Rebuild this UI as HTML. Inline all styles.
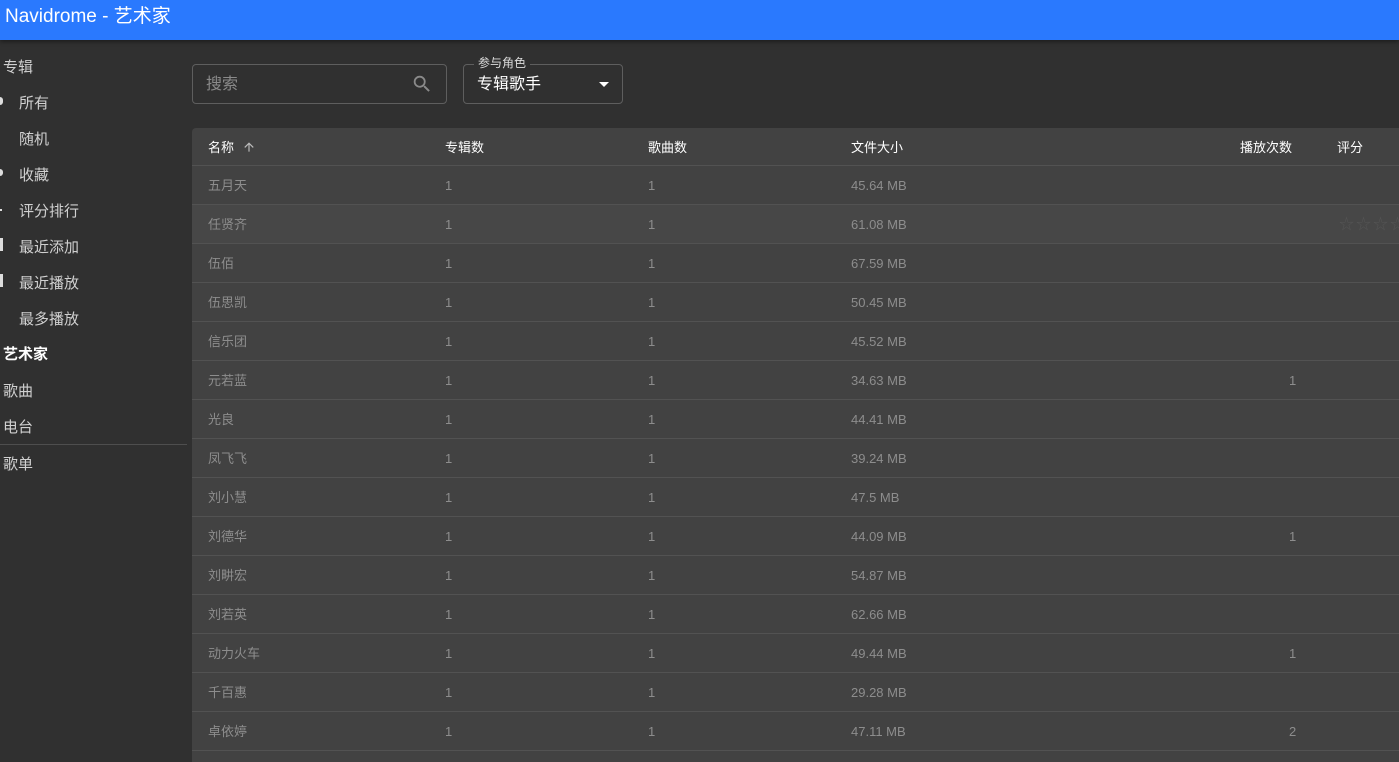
<!DOCTYPE html>
<html><head><meta charset="utf-8"><style>
*{margin:0;padding:0;box-sizing:border-box}
html,body{width:1399px;height:762px;overflow:hidden}
body{background:#303030;font-family:"Liberation Sans","Noto Sans CJK SC",sans-serif;position:relative}
.top{position:absolute;left:0;top:0;width:1399px;height:40px;background:#2a79fe;color:#fff;font-size:19px;line-height:34px;padding-left:5px;box-shadow:0 2px 4px rgba(0,0,0,.4)}
.si{position:absolute;font-size:15px;color:#d0d0d0;white-space:nowrap}
.ic{position:absolute;left:0;background:#ddd}
.sel{color:#fff;font-weight:bold}
.search{position:absolute;left:192px;top:64px;width:255px;height:40px;border:1px solid #5e5e5e;border-radius:4px;color:#8a8a8a;font-size:16px;line-height:39px;padding-left:13px}
.drop{position:absolute;left:463px;top:64px;width:160px;height:40px;border:1px solid #5e5e5e;border-radius:4px;color:#fff;font-size:16px;line-height:40px;padding-left:13px}
.lab{position:absolute;left:10px;top:-9px;font-size:12px;line-height:14px;background:#303030;padding:0 4px;color:#ddd}
.tbl{position:absolute;left:192px;top:128px;width:1207px;height:634px;background:#424242;border-radius:4px 0 0 0;overflow:hidden}
.row{position:absolute;left:0;width:1207px;height:39px;border-bottom:1px solid #525252;font-size:13px;color:#8d8d8d}
.row span{position:absolute;top:0;line-height:40px;white-space:nowrap}
.hd{color:#fff;height:38px}
</style></head><body>
<div class="top">Navidrome - 艺术家</div>
<div class="si" style="left:3px;top:56px">专辑</div>
<div class="ic" style="top:97px;width:3px;height:8px;border-radius:0 4px 4px 0"></div>
<div class="si" style="left:19px;top:92px">所有</div>
<div class="si" style="left:19px;top:128px">随机</div>
<div class="ic" style="top:169px;width:3px;height:7px;border-radius:0 4px 4px 0"></div>
<div class="si" style="left:19px;top:164px">收藏</div>
<div class="ic" style="top:209px;width:2px;height:2px"></div>
<div class="si" style="left:19px;top:200px">评分排行</div>
<div class="ic" style="top:238px;width:3px;height:13px"></div>
<div class="si" style="left:19px;top:236px">最近添加</div>
<div class="ic" style="top:274px;width:3px;height:13px"></div>
<div class="si" style="left:19px;top:272px">最近播放</div>
<div class="si" style="left:19px;top:308px">最多播放</div>
<div class="si sel" style="left:3px;top:343px">艺术家</div>
<div class="si" style="left:3px;top:380px">歌曲</div>
<div class="si" style="left:3px;top:416px">电台</div>
<div style="position:absolute;left:0;top:444px;width:187px;height:1px;background:#4e4e4e"></div>
<div class="si" style="left:3px;top:453px">歌单</div>

<div class="search">搜索
<svg style="position:absolute;right:13px;top:8px" width="22" height="22" viewBox="0 0 24 24"><path fill="#8a8a8a" d="M15.5 14h-.79l-.28-.27A6.47 6.47 0 0016 9.5 6.5 6.5 0 109.5 16c1.61 0 3.09-.59 4.23-1.57l.27.28v.79l5 4.99L20.49 19l-4.99-5zm-6 0C7.01 14 5 11.99 5 9.5S7.01 5 9.5 5 14 7.01 14 9.5 11.99 14 9.5 14z"/></svg></div>
<div class="drop"><span class="lab">参与角色</span>专辑歌手
<svg style="position:absolute;right:12px;top:16px" width="12" height="8" viewBox="0 0 12 8"><path fill="#fff" d="M1 1h10L6 6z"/></svg></div>

<div class="tbl">
<div class="row hd" style="top:0"><span style="left:16px">名称</span><svg style="position:absolute;left:50px;top:12px" width="14" height="14" viewBox="0 0 24 24"><path fill="#bbb" d="M4 12l1.41 1.41L11 7.83V20h2V7.83l5.58 5.59L20 12l-8-8-8 8z"/></svg><span style="left:253px">专辑数</span><span style="left:456px">歌曲数</span><span style="left:659px">文件大小</span><span style="left:1048px">播放次数</span><span style="left:1145px">评分</span></div>
</div>
<script>
var d=[["五月天","45.64 MB",""],["任贤齐","61.08 MB",""],["伍佰","67.59 MB",""],["伍思凯","50.45 MB",""],["信乐团","45.52 MB",""],["元若蓝","34.63 MB","1"],["光良","44.41 MB",""],["凤飞飞","39.24 MB",""],["刘小慧","47.5 MB",""],["刘德华","44.09 MB","1"],["刘畊宏","54.87 MB",""],["刘若英","62.66 MB",""],["动力火车","49.44 MB","1"],["千百惠","29.28 MB",""],["卓依婷","47.11 MB","2"],["","",""]];
var t=document.querySelector('.tbl'),h='';
d.forEach(function(r,i){var top=38+i*39;
h+='<div class="row" style="top:'+top+'px;'+(i==1?'background:#474747':'')+'">'+(r[0]?'<span style="left:16px">'+r[0]+'</span><span style="left:253px">1</span><span style="left:456px">1</span><span style="left:659px">'+r[1]+'</span><span style="left:1097px">'+r[2]+'</span>':'')+(i==1?'<span style="left:1147px;color:#555;font-size:15px;letter-spacing:2px">☆☆☆☆</span>':'')+'</div>';});
t.innerHTML+=h;
</script>
</body></html>
